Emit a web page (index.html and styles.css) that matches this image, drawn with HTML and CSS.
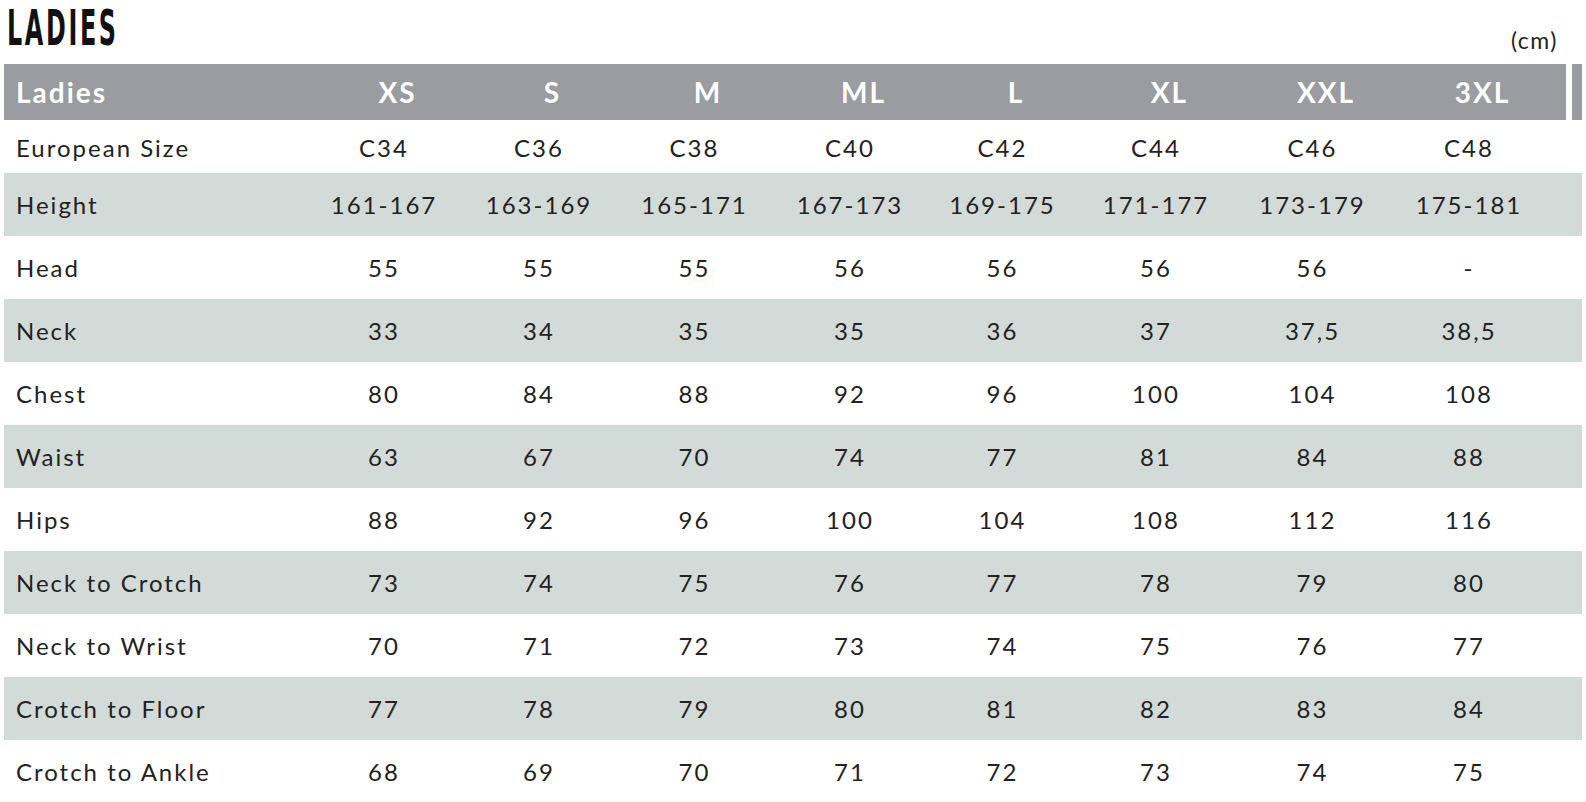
FILE: index.html
```html
<!DOCTYPE html>
<html lang="en">
<head>
<meta charset="utf-8">
<title>Ladies size chart</title>
<link rel="stylesheet" href="styles.css">
</head>
<body>
<div class="top">
  <h1 class="title">LADIES</h1>
  <div class="unit">(cm)</div>
</div>
<div class="chart">
  <div class="head">
    <div class="head-main">
      <div class="hlabel">Ladies</div>
      <div class="hcell">XS</div>
      <div class="hcell">S</div>
      <div class="hcell">M</div>
      <div class="hcell">ML</div>
      <div class="hcell">L</div>
      <div class="hcell">XL</div>
      <div class="hcell">XXL</div>
      <div class="hcell">3XL</div>
      <div></div>
    </div>
    <div class="head-tail"></div>
  </div>
  <div class="row first"><div class="label">European Size</div><div>C34</div><div>C36</div><div>C38</div><div>C40</div><div>C42</div><div>C44</div><div>C46</div><div>C48</div><div></div></div>
  <div class="row alt"><div class="label">Height</div><div>161-167</div><div>163-169</div><div>165-171</div><div>167-173</div><div>169-175</div><div>171-177</div><div>173-179</div><div>175-181</div><div></div></div>
  <div class="row"><div class="label">Head</div><div>55</div><div>55</div><div>55</div><div>56</div><div>56</div><div>56</div><div>56</div><div>-</div><div></div></div>
  <div class="row alt"><div class="label">Neck</div><div>33</div><div>34</div><div>35</div><div>35</div><div>36</div><div>37</div><div>37,5</div><div>38,5</div><div></div></div>
  <div class="row"><div class="label">Chest</div><div>80</div><div>84</div><div>88</div><div>92</div><div>96</div><div>100</div><div>104</div><div>108</div><div></div></div>
  <div class="row alt"><div class="label">Waist</div><div>63</div><div>67</div><div>70</div><div>74</div><div>77</div><div>81</div><div>84</div><div>88</div><div></div></div>
  <div class="row"><div class="label">Hips</div><div>88</div><div>92</div><div>96</div><div>100</div><div>104</div><div>108</div><div>112</div><div>116</div><div></div></div>
  <div class="row alt"><div class="label">Neck to Crotch</div><div>73</div><div>74</div><div>75</div><div>76</div><div>77</div><div>78</div><div>79</div><div>80</div><div></div></div>
  <div class="row"><div class="label">Neck to Wrist</div><div>70</div><div>71</div><div>72</div><div>73</div><div>74</div><div>75</div><div>76</div><div>77</div><div></div></div>
  <div class="row alt"><div class="label">Crotch to Floor</div><div>77</div><div>78</div><div>79</div><div>80</div><div>81</div><div>82</div><div>83</div><div>84</div><div></div></div>
  <div class="row"><div class="label">Crotch to Ankle</div><div>68</div><div>69</div><div>70</div><div>71</div><div>72</div><div>73</div><div>74</div><div>75</div><div></div></div>
</div>
</body>
</html>
```

FILE: styles.css
```css
html, body {
  margin: 0;
  padding: 0;
  background: #ffffff;
}
body {
  font-family: Lato, "Noto Sans", sans-serif;
  color: #222222;
  width: 1586px;
  height: 802px;
  overflow: hidden;
}
.top {
  height: 64px;
  display: flex;
  justify-content: space-between;
  align-items: flex-start;
  box-sizing: border-box;
  padding: 0 28px 0 7px;
}
.title {
  margin: 0;
  padding-top: 3px;
  font-family: "DejaVu Sans Condensed", "DejaVu Sans", sans-serif;
  font-weight: bold;
  font-size: 50px;
  line-height: 50px;
  letter-spacing: 5px;
  color: #111;
  display: inline-block;
  transform: scaleX(0.53);
  transform-origin: left center;
}
.unit {
  font-size: 23px;
  letter-spacing: 1.5px;
  padding-top: 26px;
  color: #222;
}
.chart {
  margin-left: 4px;
  width: 1578px;
}
.head {
  display: flex;
  height: 56px;
}
.head-main {
  width: 1562px;
  background: #9b9c9f;
  display: grid;
  grid-template-columns: 302px 156px 154px 157px 154px 151px 156px 157px 156px 1fr;
  align-items: center;
  color: #ffffff;
  font-weight: bold;
  font-size: 28px;
  letter-spacing: 2px;
}
.head-tail {
  width: 10px;
  margin-left: 6px;
  background: #9b9c9f;
}
.hlabel {
  padding-left: 12px;
}
.hcell {
  text-align: center;
  padding-left: 27px;
}
.row {
  display: grid;
  grid-template-columns: 302px 156px 154px 157px 154px 151px 156px 157px 156px 1fr;
  align-items: center;
  height: 63px;
  font-size: 24px;
  letter-spacing: 2px;
  text-align: center;
}
.row.first {
  height: 53px;
  padding-top: 2px;
  box-sizing: border-box;
}
.row.alt {
  background: #d3dbd8;
}
.row .label {
  text-align: left;
  padding-left: 12px;
}
```
